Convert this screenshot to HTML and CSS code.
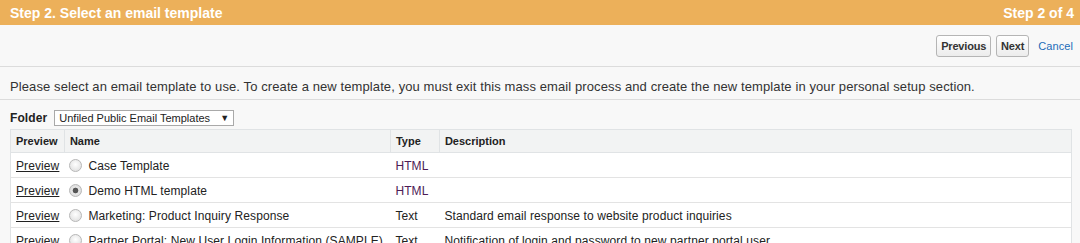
FILE: index.html
```html
<!DOCTYPE html>
<html lang="en">
<head>
    <meta charset="UTF-8">
    <title>Mass Email - Step 2</title>
    <link rel="stylesheet" href="styles.css">
</head>
<body>
    <div class="step-bar">
        <h2>Step 2. Select an email template</h2>
        <span class="step-count">Step 2 of 4</span>
    </div>

    <div class="actions">
        <button class="btn">Previous</button>
        <button class="btn">Next</button>
        <a href="#" class="cancel">Cancel</a>
    </div>

    <p class="instructions">Please select an email template to use. To create a new template, you must exit this mass email process and create the new template in your personal setup section.</p>

    <div class="folder">
        <label>Folder</label>
        <div class="select">Unfiled Public Email Templates <span class="arrow">&#9660;</span></div>
    </div>

    <table class="list">
        <thead>
            <tr>
                <th class="col-preview">Preview</th>
                <th class="col-name">Name</th>
                <th class="col-type">Type</th>
                <th>Description</th>
            </tr>
        </thead>
        <tbody>
            <tr>
                <td><a href="#">Preview</a></td>
                <td><span class="radio"></span>Case Template</td>
                <td class="html">HTML</td>
                <td></td>
            </tr>
            <tr>
                <td><a href="#">Preview</a></td>
                <td><span class="radio checked"></span>Demo HTML template</td>
                <td class="html">HTML</td>
                <td></td>
            </tr>
            <tr>
                <td><a href="#">Preview</a></td>
                <td><span class="radio"></span>Marketing: Product Inquiry Response</td>
                <td>Text</td>
                <td>Standard email response to website product inquiries</td>
            </tr>
            <tr>
                <td><a href="#">Preview</a></td>
                <td><span class="radio"></span>Partner Portal: New User Login Information (SAMPLE)</td>
                <td>Text</td>
                <td>Notification of login and password to new partner portal user</td>
            </tr>
        </tbody>
    </table>
</body>
</html>
```

FILE: styles.css
```css
body {
    margin: 0;
    font-family: "Liberation Sans", Arial, sans-serif;
    font-size: 12px;
    letter-spacing: 0.1px;
    color: #222;
    background: #f8f8f8;
}
.step-bar {
    display: flex;
    justify-content: space-between;
    align-items: center;
    height: 25px;
    padding: 0 6px 0 10px;
    background: #ecb05a;
    color: #fff;
    letter-spacing: 0;
}
.step-bar h2 {
    margin: 0;
    font-size: 14px;
    font-weight: bold;
}
.step-count {
    font-size: 14px;
    font-weight: bold;
}
.actions {
    display: flex;
    justify-content: flex-end;
    align-items: center;
    gap: 5px;
    height: 41px;
    padding: 0 7px 0 10px;
    border-bottom: 1px solid #dcdcdc;
}
.btn {
    height: 22px;
    padding: 0 4px;
    font-family: "Liberation Sans", Arial, sans-serif;
    font-size: 11px;
    font-weight: bold;
    letter-spacing: -0.2px;
    color: #333;
    background: linear-gradient(#fff, #ececec);
    border: 1px solid #b5b5b5;
    border-radius: 3px;
}
.cancel {
    margin-left: 4px;
    color: #1d6cb8;
    font-size: 11px;
    text-decoration: none;
}
.instructions {
    margin: 0;
    padding: 3px 10px 0;
    height: 29px;
    line-height: 34px;
    font-size: 13px;
    color: #333;
    border-bottom: 1px solid #dcdcdc;
}
.folder {
    display: flex;
    align-items: center;
    gap: 7px;
    padding: 10px 10px 3px;
}
.folder label {
    font-weight: bold;
    font-size: 12px;
}
.select {
    display: flex;
    justify-content: space-between;
    align-items: center;
    width: 170px;
    height: 14px;
    padding: 0 4px;
    font-size: 11px;
    letter-spacing: 0;
    background: #fff;
    border: 1px solid #a9a9a9;
}
.arrow {
    font-size: 9px;
}
.list {
    margin: 0 8px 0 10px;
    width: calc(100% - 18px);
    border-collapse: collapse;
    background: #fff;
    border: 1px solid #e0e3e5;
}
.list th {
    height: 22px;
    padding: 0 5px;
    text-align: left;
    font-size: 11px;
    font-weight: bold;
    letter-spacing: 0;
    background: #f2f3f3;
    border-bottom: 1px solid #e0e3e5;
    border-left: 1px solid #e0e3e5;
}
.list td {
    height: 23px;
    padding: 1px 5px 0;
    font-size: 12px;
    border-bottom: 1px solid #e3e3e3;
}
.col-preview { width: 41px; }
.col-name { width: 315px; }
.col-type { width: 38px; }
.list td a {
    color: #222;
}
.list td.html {
    color: #4d1b56;
}
.radio {
    display: inline-block;
    width: 13px;
    height: 13px;
    margin: 0 6px 0 0;
    vertical-align: -2px;
    border: 1px solid #b8b8b8;
    border-radius: 50%;
    background: radial-gradient(circle at 50% 40%, #fff, #dadada);
    box-sizing: border-box;
}
.radio.checked {
    background: radial-gradient(circle, #555 0 2.5px, #e8e8e8 3.2px, #d4d4d4);
}
```
